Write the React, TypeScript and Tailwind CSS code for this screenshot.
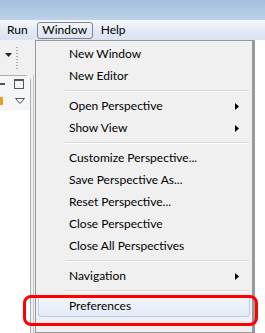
import React from "react";

type Entry = { label?: string; sub?: boolean; sep?: boolean; active?: boolean };

const items: Entry[] = [
  { label: "New Window" },
  { label: "New Editor" },
  { sep: true },
  { label: "Open Perspective", sub: true },
  { label: "Show View", sub: true },
  { sep: true },
  { label: "Customize Perspective..." },
  { label: "Save Perspective As..." },
  { label: "Reset Perspective..." },
  { label: "Close Perspective" },
  { label: "Close All Perspectives" },
  { sep: true },
  { label: "Navigation", sub: true },
  { sep: true },
  { label: "Preferences", active: true },
];

function Arrow() {
  return (
    <svg width="4" height="7" viewBox="0 0 4 7" className="mr-[10px]">
      <path d="M0 0 L4 3.5 L0 7 Z" fill="#000" />
    </svg>
  );
}

export default function App() {
  return (
    <div
      className="relative h-[333px] w-[265px] overflow-hidden bg-white text-[12px] text-black"
      style={{ fontFamily: "Lato, 'Noto Sans', sans-serif" }}
    >
      {/* window title band */}
      <div className="h-[20px] bg-gradient-to-b from-[#a4bfdc] to-[#bdd2ea]" />

      {/* menu bar */}
      <div className="flex h-[20px] items-center bg-gradient-to-b from-[#f6f8fc] via-[#e4e9f5] to-[#dbe2f2] pl-[7px]">
        <span className="mr-[9px]">Run</span>
        <span className="flex h-[17px] w-[56px] items-center justify-center rounded-[3px] border border-[#7f8590] bg-gradient-to-b from-[#f2f4f8] to-[#dde3ee]">
          Window
        </span>
        <span className="ml-[8px]">Help</span>
      </div>

      <div className="flex">
        {/* left workbench strip */}
        <div className="flex w-[35px] flex-col">
          <div className="flex h-[35px] bg-[#f0f0f0]">
            <div className="flex w-[16px] items-center justify-center pb-[6px]">
              <svg width="7" height="4" viewBox="0 0 7 4">
                <path d="M0 0 H7 L3.5 4 Z" fill="#222" />
              </svg>
            </div>
            <div className="mt-[7px] flex flex-col gap-[2px]">
              {[0, 1, 2, 3, 4, 5, 6, 7].map((i) => (
                <span key={i} className="h-[1px] w-[2px] bg-[#b0b0b0]" />
              ))}
            </div>
          </div>
          <div className="flex flex-1 bg-[#f0f0f0]">
            <div className="flex h-[258px] w-[31px] flex-col rounded-tr-[6px] border-r border-t border-[#a9aeb5] bg-white">
              <div className="flex h-[16px] items-center bg-[#f4f5f7]">
                <span className="ml-0 h-[2px] w-[5px] border border-[#555]" />
                <span className="ml-[9px] h-[10px] w-[10px] border border-[#555] border-t-2" />
              </div>
              <div className="flex h-[18px] items-center bg-[#f4f5f7]">
                <span className="h-[8px] w-[3px] bg-[#e8a020]" />
                <svg width="10" height="6" viewBox="0 0 10 6" className="ml-[12px]">
                  <path d="M0.5 0.5 H9.5 L5 5.5 Z" fill="none" stroke="#555" />
                </svg>
              </div>
            </div>
            <div className="ml-[2px] w-[1px] bg-[#c6c6c6]" />
          </div>
        </div>

        {/* Window menu */}
        <div className="w-[218px] border border-[#979797] bg-[#f0f0f0] p-[2px]">
          {items.map((it, i) =>
            it.sep ? (
              <div key={i} className="flex h-[8px] items-center pl-[27px] pr-[1px]">
                <div className="w-full border-t border-b border-t-[#d7d7d7] border-b-white" />
              </div>
            ) : (
              <div
                key={i}
                className={
                  "flex h-[22px] items-center justify-between rounded-[3px] pl-[30px] " +
                  (it.active
                    ? "border border-[#aecff7] bg-gradient-to-b from-[#f2f6fb] to-[#e4ecf7]"
                    : "border border-transparent")
                }
              >
                <span>{it.label}</span>
                {it.sub && <Arrow />}
              </div>
            )
          )}
        </div>

        {/* right edge of window behind */}
        <div className="flex flex-1 bg-white">
          <div className="w-[2px] bg-[#9a9a9a]" />
        </div>
      </div>

      {/* annotation */}
      <div className="absolute left-[23px] top-[295px] h-[31px] w-[235px] rounded-[8px] border-[3px] border-[#ff0000]" />
    </div>
  );
}
